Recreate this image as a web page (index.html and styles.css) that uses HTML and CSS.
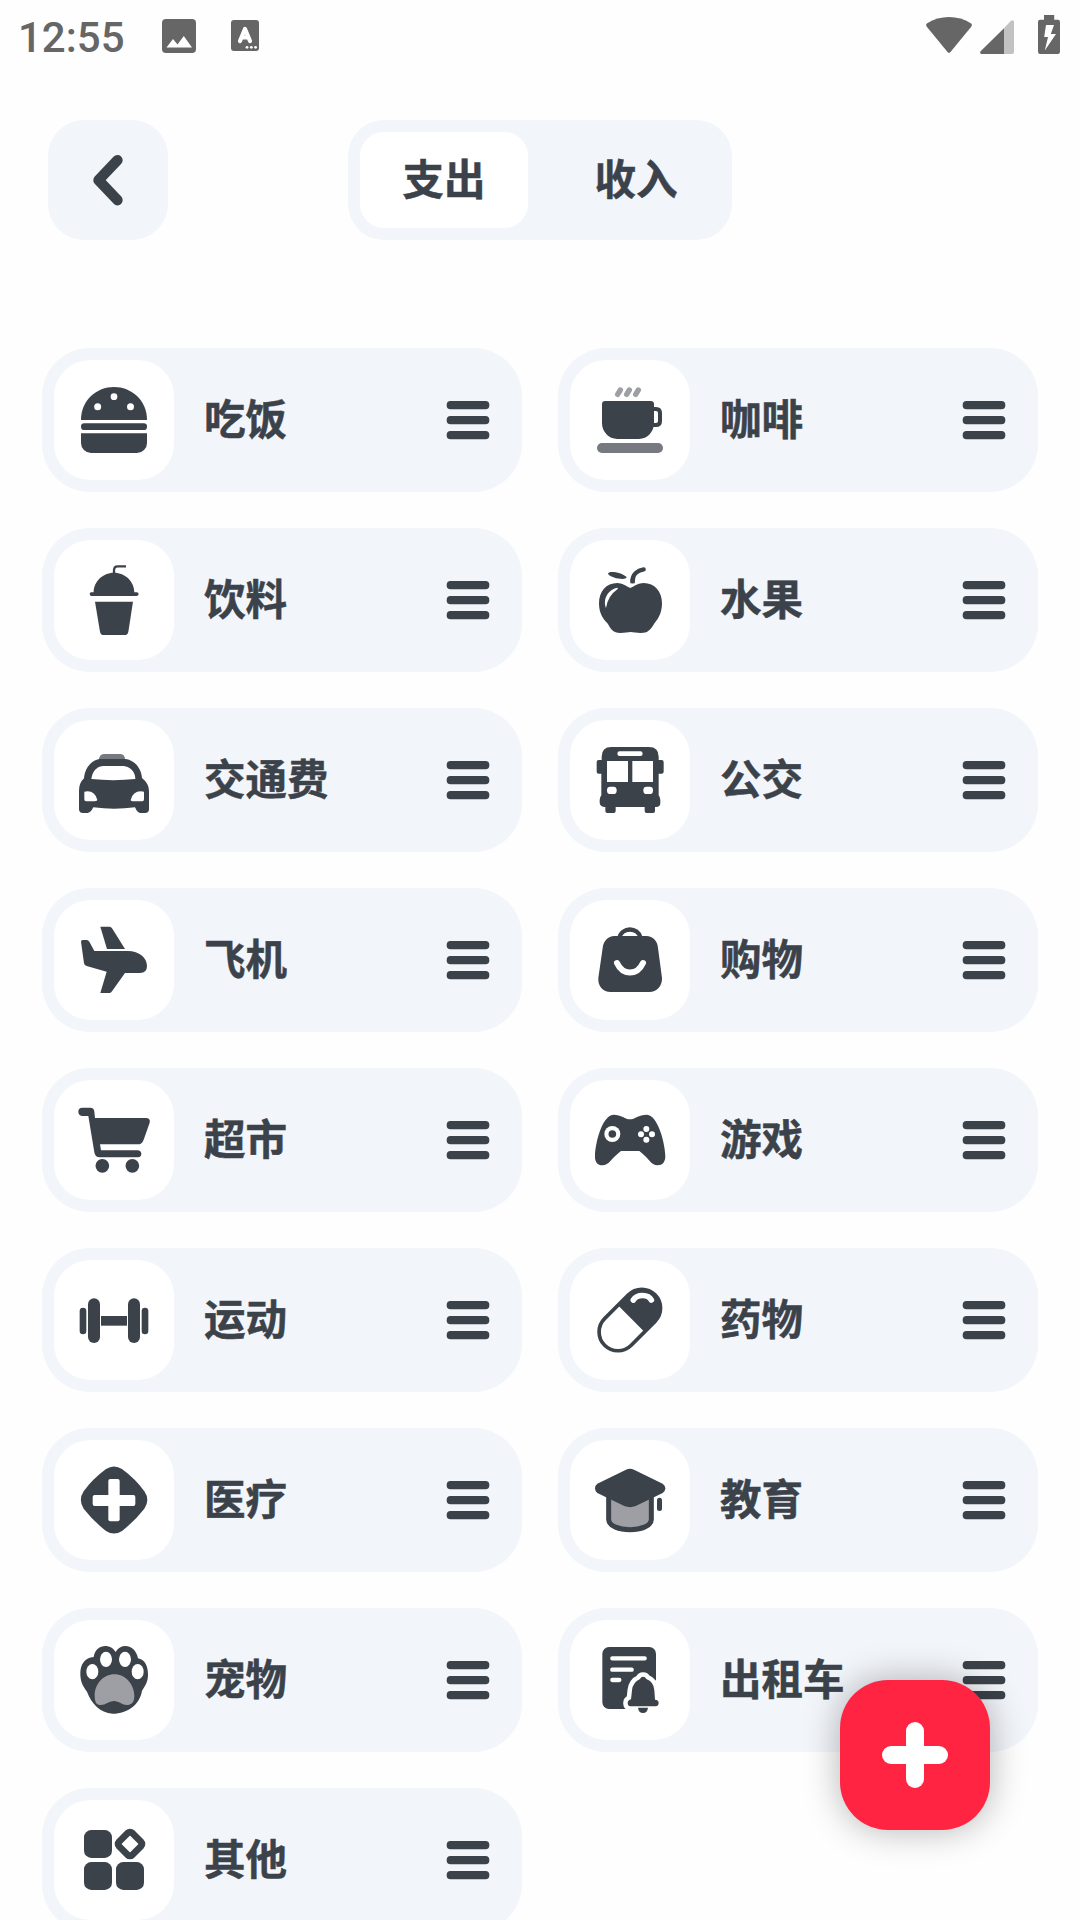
FILE: index.html
```html
<!DOCTYPE html>
<html lang="zh-CN">
<head>
<meta charset="utf-8">
<title>分类管理</title>
<link rel="stylesheet" href="styles.css">
</head>
<body>
<svg class="sprite" aria-hidden="true">
  <symbol id="menu" viewBox="0 0 48 48">
    <rect x="2.7" y="5" width="42.6" height="8.2" rx="3.8"/>
    <rect x="2.7" y="20" width="42.6" height="8.2" rx="3.8"/>
    <rect x="2.7" y="35" width="42.6" height="8.2" rx="3.8"/>
  </symbol>
</svg>

<div class="status">
  <span class="clock">12:55</span>
  <svg class="status-photo" viewBox="0 0 34 34"><rect width="34" height="34" rx="4"/><path class="cut" d="M4.5 28.500 11 20l4.500 5.500 6.300-8.500L30 28.500z"/></svg>
  <svg class="status-input" viewBox="0 0 28 31"><rect width="28" height="31" rx="3"/><path class="a-mark" d="M9 21 14 9l5 12M11 17.500h6"/><circle class="cut" cx="16" cy="27.300" r="1.400"/><circle class="cut" cx="20.300" cy="27.300" r="1.400"/><circle class="cut" cx="24.600" cy="27.300" r="1.400"/></svg>
  <svg class="status-wifi" viewBox="0 0 46 36"><path d="M1 10C-.2 8.500-.2 7.300 1.200 6.300 14-2.100 32-2.100 44.800 6.300 46.200 7.300 46.200 8.500 45 10L24.500 35Q23 36.700 21.500 35z"/></svg>
  <svg class="status-signal" viewBox="0 0 34 34"><path class="weak" d="M24 8.200 31 .8Q34-1 34 2V32Q34 34 32 34H24z"/><path d="M24 8.200V34H2Q-.8 34 .6 31.200z"/></svg>
  <svg class="status-battery" viewBox="0 0 22 39"><path d="M6 0H16.200V4.700H20Q22 4.700 22 7V36.500Q22 39 20 39H2Q0 39 0 36.500V7Q0 4.700 2 4.700H6z"/><path class="cut" d="M8 10H16l-3.200 9H18L6.800 35.500 10 22H6.200z"/></svg>
</div>

<header class="top">
  <button class="back" aria-label="返回"><svg viewBox="0 0 120 120"><path d="M69.500 40.200 50.500 60.200 69.500 80.200"/></svg></button>
  <div class="tabs"><span class="tab active">支出</span><span class="tab">收入</span></div>
</header>

<main class="grid">
  <div class="card"><div class="tile"><svg viewBox="72 60 360 360">
    <path d="M153 240C153 180 200 141 252 141S351 180 351 240Z"/><circle class="cut" cx="203" cy="200" r="10.500"/><circle class="cut" cx="252" cy="170" r="10"/><circle class="cut" cx="301.500" cy="200" r="10.500"/>
    <rect x="153" y="250" width="198" height="20" rx="10"/><path d="M153 280H351V309a30 30 0 0 1-30 30H183a30 30 0 0 1-30-30Z"/></svg></div>
    <span class="name">吃饭</span><svg class="menu"><use href="#menu"/></svg></div>

  <div class="card"><div class="tile"><svg viewBox="60 60 360 360">
    <path class="line pale-line" stroke-width="16" d="M203 163 211 150M230 163 238 150M257 163 265 150"/>
    <path d="M156 193Q156 183 166 183H302Q312 183 312 193V250C312 275 292 297 267 297H202C176 297 156 275 156 250Z"/>
    <path class="line" stroke-width="12" d="M310 207H318Q330 207 330 219V243Q330 255 318 255H306"/>
    <rect class="mid" x="141" y="309" width="198" height="30" rx="15"/></svg></div>
    <span class="name">咖啡</span><svg class="menu"><use href="#menu"/></svg></div>

  <div class="card"><div class="tile"><svg viewBox="72 600 360 360">
    <path class="line butt" stroke-width="7" d="M252 702V691Q252 679 263 679H288"/>
    <path d="M191 757C191 725 218 698 252 698S313 725 313 757H320Q326 757 326 762T320 768H185Q179 768 179 762T185 757Z"/>
    <path d="M195 785H309L295 875Q293 885 284 885H221Q212 885 210 875Z"/></svg></div>
    <span class="name">饮料</span><svg class="menu"><use href="#menu"/></svg></div>

  <div class="card"><div class="tile"><svg viewBox="60 600 360 360">
    <path d="M174 701C175 691 214 696 230 711C230 722 184 716 174 701Z"/>
    <path class="line" stroke-width="13" d="M248 723C247 703 263 691 281 688"/>
    <path class="line butt" stroke-width="13" d="M247.500 716V730"/>
    <path d="M241 744C253 738 266 729 281 729C314 729 336 755 336 790C336 824 320 842 312 852C302 869 294 879 272 879C260 879 250 876 242 876S224 879 211 879C190 879 181 866 174 852C160 838 147 821 147 790C147 755 168 729 202 729C215 729 229 738 241 744Z"/>
    <path class="cut" d="M203 743C178 747 157 773 168 804Q173 768 203 747Z"/></svg></div>
    <span class="name">水果</span><svg class="menu"><use href="#menu"/></svg></div>

  <div class="card"><div class="tile"><svg viewBox="72 60 360 360">
    <path class="mid" d="M206 180Q209 162 221 162H272Q284 162 286 180Z"/>
    <path d="M208 177H286C315 180 334 206 336 234Q357 251 357 272V327Q357 339 345 339H331Q322 339 315 322Q252 330 190 322Q182 339 172 339H159Q147 339 147 327V272Q147 249 162 235C164 207 182 181 208 177Z"/>
    <path class="cut" d="M184 237C187 211 204 198 221 198H281C300 200 316 215 316 237Q250 244 184 237Z"/>
    <path class="cut" d="M163 275Q194 269 202 300Q201 304 192 304H168Q163 304 163 298ZM342 275Q310 269 302 300Q302 304 312 304H337Q342 304 342 298Z"/></svg></div>
    <span class="name">交通费</span><svg class="menu"><use href="#menu"/></svg></div>

  <div class="card"><div class="tile"><svg viewBox="60 60 360 360">
    <path d="M184 141H297Q326 141 326 170V180H335Q341 180 341 186V215Q341 221 335 221H326V286Q331 292 331 300V308Q331 321 318 321H315V333Q315 339 309 339H290Q284 339 284 333V321H197V333Q197 339 191 339H172Q166 339 166 333V321H163Q149 320 149 307V300Q149 292 154 286V221H146Q140 221 140 215V186Q140 180 146 180H155V170Q155 141 184 141Z"/>
    <path class="cut" d="M171 183H234V246H171ZM247 183H309V246H247Z"/>
    <rect class="cut" x="202" y="154" width="76" height="14" rx="7"/>
    <rect class="cut" x="171" y="260" width="29" height="22" rx="10"/><rect class="cut" x="280" y="260" width="29" height="22" rx="10"/></svg></div>
    <span class="name">公交</span><svg class="menu"><use href="#menu"/></svg></div>

  <div class="card"><div class="tile"><svg viewBox="72 600 360 360">
    <path d="M211 680H239Q243 680 247 686L285 747H231Z"/>
    <path d="M153 725Q153 720 158 720H170Q175 720 178 725L193 753H293C329 753 351 774 351 798Q351 819 330 819H285L246 874Q243 879 239 879H211L230 815L170 798Q163 796 162 790Z"/></svg></div>
    <span class="name">飞机</span><svg class="menu"><use href="#menu"/></svg></div>

  <div class="card"><div class="tile"><svg viewBox="60 600 360 360">
    <path class="line butt" stroke-width="13" d="M208 714C215 680 264 680 272 714"/>
    <path d="M193 708H289C309 708 323 723 324 744L336 834C337 858 320 876 298 876H182C159 876 143 858 145 834L158 744C160 723 174 708 193 708Z"/>
    <path class="line cut-line" stroke-width="18" d="M201 789C218 826 261 828 279 789"/></svg></div>
    <span class="name">购物</span><svg class="menu"><use href="#menu"/></svg></div>

  <div class="card"><div class="tile"><svg viewBox="72 60 360 360">
    <path d="M157 143H181Q192 143 193 155L195 174H350Q362 176 359 188L341 239Q336 253 324 253H210L213 271H324Q334 273 334 282T324 292H209Q195 292 193 277L175 168H158Q145 167 145 155T157 143Z"/>
    <circle cx="217" cy="317.500" r="20.500"/><circle cx="307" cy="317.500" r="20.500"/></svg></div>
    <span class="name">超市</span><svg class="menu"><use href="#menu"/></svg></div>

  <div class="card"><div class="tile"><svg viewBox="60 60 360 360">
    <path d="M190 164C214 164 226 178 240 178S265 164 291 164C324 165 346 253 346 289C346 306 337 316 323 316C302 316 297 294 268 273H213C184 294 178 316 157 316C143 316 134 306 135 287C136 251 155 167 190 164Z"/>
    <circle class="cut" cx="187" cy="222" r="24"/><circle cx="187" cy="222" r="11.500"/>
    <circle class="cut" cx="289" cy="207" r="9"/><circle class="cut" cx="273" cy="223" r="9"/><circle class="cut" cx="306" cy="223" r="9"/><circle class="cut" cx="289" cy="239" r="9"/></svg></div>
    <span class="name">游戏</span><svg class="menu"><use href="#menu"/></svg></div>

  <div class="card"><div class="tile"><svg viewBox="72 600 360 360">
    <rect x="149" y="743" width="20" height="80" rx="10"/><rect x="174" y="715" width="36" height="134" rx="18"/>
    <rect x="213" y="768" width="78" height="29"/><rect x="294" y="715" width="36" height="134" rx="18"/><rect x="335" y="743" width="20" height="80" rx="10"/></svg></div>
    <span class="name">运动</span><svg class="menu"><use href="#menu"/></svg></div>

  <div class="card"><div class="tile"><svg viewBox="60 600 360 360">
    <g transform="rotate(45 239.500 780)"><rect class="outline" x="183" y="673" width="113" height="214" rx="56.500"/><path d="M183 774V729.500a56.500 56.500 0 0 1 113 0V774Z"/></g>
    <path class="line cut-line" stroke-width="17" d="M250 720C261 702 295 702 304 720"/></svg></div>
    <span class="name">药物</span><svg class="menu"><use href="#menu"/></svg></div>

  <div class="card"><div class="tile"><svg viewBox="72 60 360 360">
    <path d="M228 147Q252 132 276 147Q318 178 343 214Q361 240 343 266Q314 303 276 333Q252 348 228 333Q190 303 161 266Q144 240 161 214Q186 178 228 147Z"/>
    <rect class="cut" x="235" y="177" width="34" height="127" rx="6"/><rect class="cut" x="188" y="225" width="128" height="33" rx="6"/></svg></div>
    <span class="name">医疗</span><svg class="menu"><use href="#menu"/></svg></div>

  <div class="card"><div class="tile"><svg viewBox="60 60 360 360">
    <path class="pale ring" stroke-width="15" d="M176 220V299C178 339 302 339 304 299V220"/>
    <path d="M228 149Q240 144 252 149L338 191Q346 197 346 205T338 219L257 258Q240 265 223 258L142 219Q135 214 135 205T142 191Z"/>
    <rect x="321" y="233" width="15" height="40" rx="7.500"/></svg></div>
    <span class="name">教育</span><svg class="menu"><use href="#menu"/></svg></div>

  <div class="card"><div class="tile"><svg viewBox="72 600 360 360">
    <path d="M191 711C196 672 241 668 257 696C274 667 316 674 324 715C344 718 354 738 354 764C354 786 345 798 336 812C330 852 294 881 248 881C209 878 184 850 171 815C157 797 151 784 151 760C151 733 165 712 191 711Z"/>
    <ellipse class="cut" cx="187" cy="755" rx="18" ry="23"/><ellipse class="cut" cx="228" cy="718" rx="18" ry="23"/><ellipse class="cut" cx="285" cy="718" rx="18" ry="23"/><ellipse class="cut" cx="323" cy="755" rx="18" ry="23"/>
    <path class="pale" d="M253 763C288 763 313 795 313 828C313 850 302 855 291 855C276 855 267 843 252 843S227 855 212 855C200 855 194 847 194 827C194 794 219 763 253 763Z"/></svg></div>
    <span class="name">宠物</span><svg class="menu"><use href="#menu"/></svg></div>

  <div class="card"><div class="tile"><svg viewBox="60 600 360 360">
    <rect x="157" y="681" width="161" height="186" rx="20"/>
    <path class="line cut-line" stroke-width="13" d="M187 715H284M187 749H245M187 780H208"/>
    <path class="bell-gap" d="M279 770Q286 770 289 777Q312 786 313 811L315 839Q326 840 326 849Q325 859 317 859H241Q233 858 233 849Q233 841 243 838L246 811Q248 787 270 777Q273 770 279 770Z"/>
    <path class="cut" d="M226 867H334V884H226ZM318 780H335V884H318Z"/>
    <path d="M279 770Q286 770 289 777Q312 786 313 811L315 839Q326 840 326 849Q325 859 317 859H241Q233 858 233 849Q233 841 243 838L246 811Q248 787 270 777Q273 770 279 770Z"/>
    <path d="M264 863H294Q292 879 279 879T264 863Z"/></svg></div>
    <span class="name">出租车</span><svg class="menu"><use href="#menu"/></svg></div>

  <div class="card"><div class="tile"><svg viewBox="72 1140 360 360">
    <rect x="162" y="1230" width="84" height="84" rx="22"/><rect x="162" y="1326" width="84" height="84" rx="22"/><rect x="258" y="1326" width="84" height="84" rx="22"/>
    <rect x="262" y="1234" width="76" height="76" rx="19" transform="rotate(45 300 1272)"/><rect class="cut" x="282" y="1254" width="36" height="36" rx="2" transform="rotate(45 300 1272)"/></svg></div>
    <span class="name">其他</span><svg class="menu"><use href="#menu"/></svg></div>
</main>

<button class="fab" aria-label="添加"><svg viewBox="0 0 150 150"><rect x="66" y="42" width="18" height="66" rx="9"/><rect x="42" y="66" width="66" height="18" rx="9"/></svg></button>
</body>
</html>
```

FILE: styles.css
```css
* { box-sizing: border-box; }

body {
  position: relative;
  width: 1080px;
  height: 1920px;
  margin: 0;
  overflow: hidden;
  background: #fefefe;
  color: #3c424a;
  fill: #3c424a;
  font-family: "Noto Sans CJK SC", sans-serif;
}

svg { display: block; flex: none; }
button { padding: 0; border: 0; fill: inherit; }
.sprite { display: none; }
.cut { fill: #fff; }

/* status bar */
.status {
  display: flex;
  align-items: flex-start;
  height: 72px;
  padding: 0 20px 0 18px;
  fill: #666;
}
.clock {
  width: 144px;
  padding-top: 13px;
  color: #666;
  font: 500 42px/50px Roboto, sans-serif;
}
.status-photo { width: 34px; height: 34px; margin-top: 19px; }
.status-input { width: 28px; height: 31px; margin: 20px auto 0 35px; }
.a-mark { fill: none; stroke: #fff; stroke-width: 4.2; stroke-linecap: round; stroke-linejoin: round; }
.status-wifi { width: 46px; height: 36px; margin-top: 17px; }
.status-signal { width: 34px; height: 34px; margin: 20px 24px 0 8px; }
.status-battery { width: 22px; height: 39px; margin-top: 15px; }
.weak { fill: #c2c2c2; }

/* header */
.top {
  display: grid;
  grid-template-columns: 120px 1fr 120px;
  justify-items: center;
  padding: 48px 48px 0;
}
.back {
  width: 120px;
  height: 120px;
  border-radius: 36px;
  background: #f2f5fa;
}
.back path {
  fill: none;
  stroke: #3c424a;
  stroke-width: 10.4;
  stroke-linecap: round;
  stroke-linejoin: round;
}
.tabs {
  display: flex;
  gap: 24px;
  padding: 12px;
  border-radius: 36px;
  background: #f2f5fa;
}
.tab {
  width: 168px;
  height: 96px;
  border-radius: 24px;
  font-size: 41.5px;
  font-weight: 700;
  line-height: 91px;
  text-align: center;
  -webkit-text-stroke: .5px #3c424a;
}
.tab.active { background: #fff; }

/* category list */
.grid {
  display: grid;
  grid-template-columns: 480px 480px;
  gap: 36px;
  padding: 108px 42px 0;
}
.card {
  display: flex;
  align-items: center;
  height: 144px;
  padding: 0 30px 0 12px;
  border-radius: 48px;
  background: #f2f5fa;
}
.tile {
  width: 120px;
  height: 120px;
  border-radius: 36px;
  background: #fff;
}
.tile svg { width: 120px; height: 120px; }
.name {
  flex: 1;
  padding-left: 30px;
  font-size: 41.5px;
  font-weight: 700;
  line-height: 60px;
  margin-top: -6px;
  -webkit-text-stroke: .5px #3c424a;
}
.menu { width: 48px; height: 48px; }

.line {
  fill: none;
  stroke: #3c424a;
  stroke-linecap: round;
  stroke-linejoin: round;
}
.butt { stroke-linecap: butt; }
.cut-line { stroke: #fff; }
.pale-line { stroke: #9d9fa4; stroke-width: 16; }
.mid { fill: #767980; }
.pale { fill: #9d9fa4; }
.ring { stroke: #3c424a; }
.outline { fill: #fff; stroke: #3c424a; stroke-width: 11; }
.bell-gap { fill: #fff; stroke: #fff; stroke-width: 27; stroke-linejoin: round; }

/* floating add button */
.fab {
  position: absolute;
  right: 90px;
  bottom: 90px;
  width: 150px;
  height: 150px;
  border-radius: 48px;
  background: #ff2442;
  box-shadow: 0 0 36px rgba(0, 0, 0, .3);
  fill: #fff;
}
```
